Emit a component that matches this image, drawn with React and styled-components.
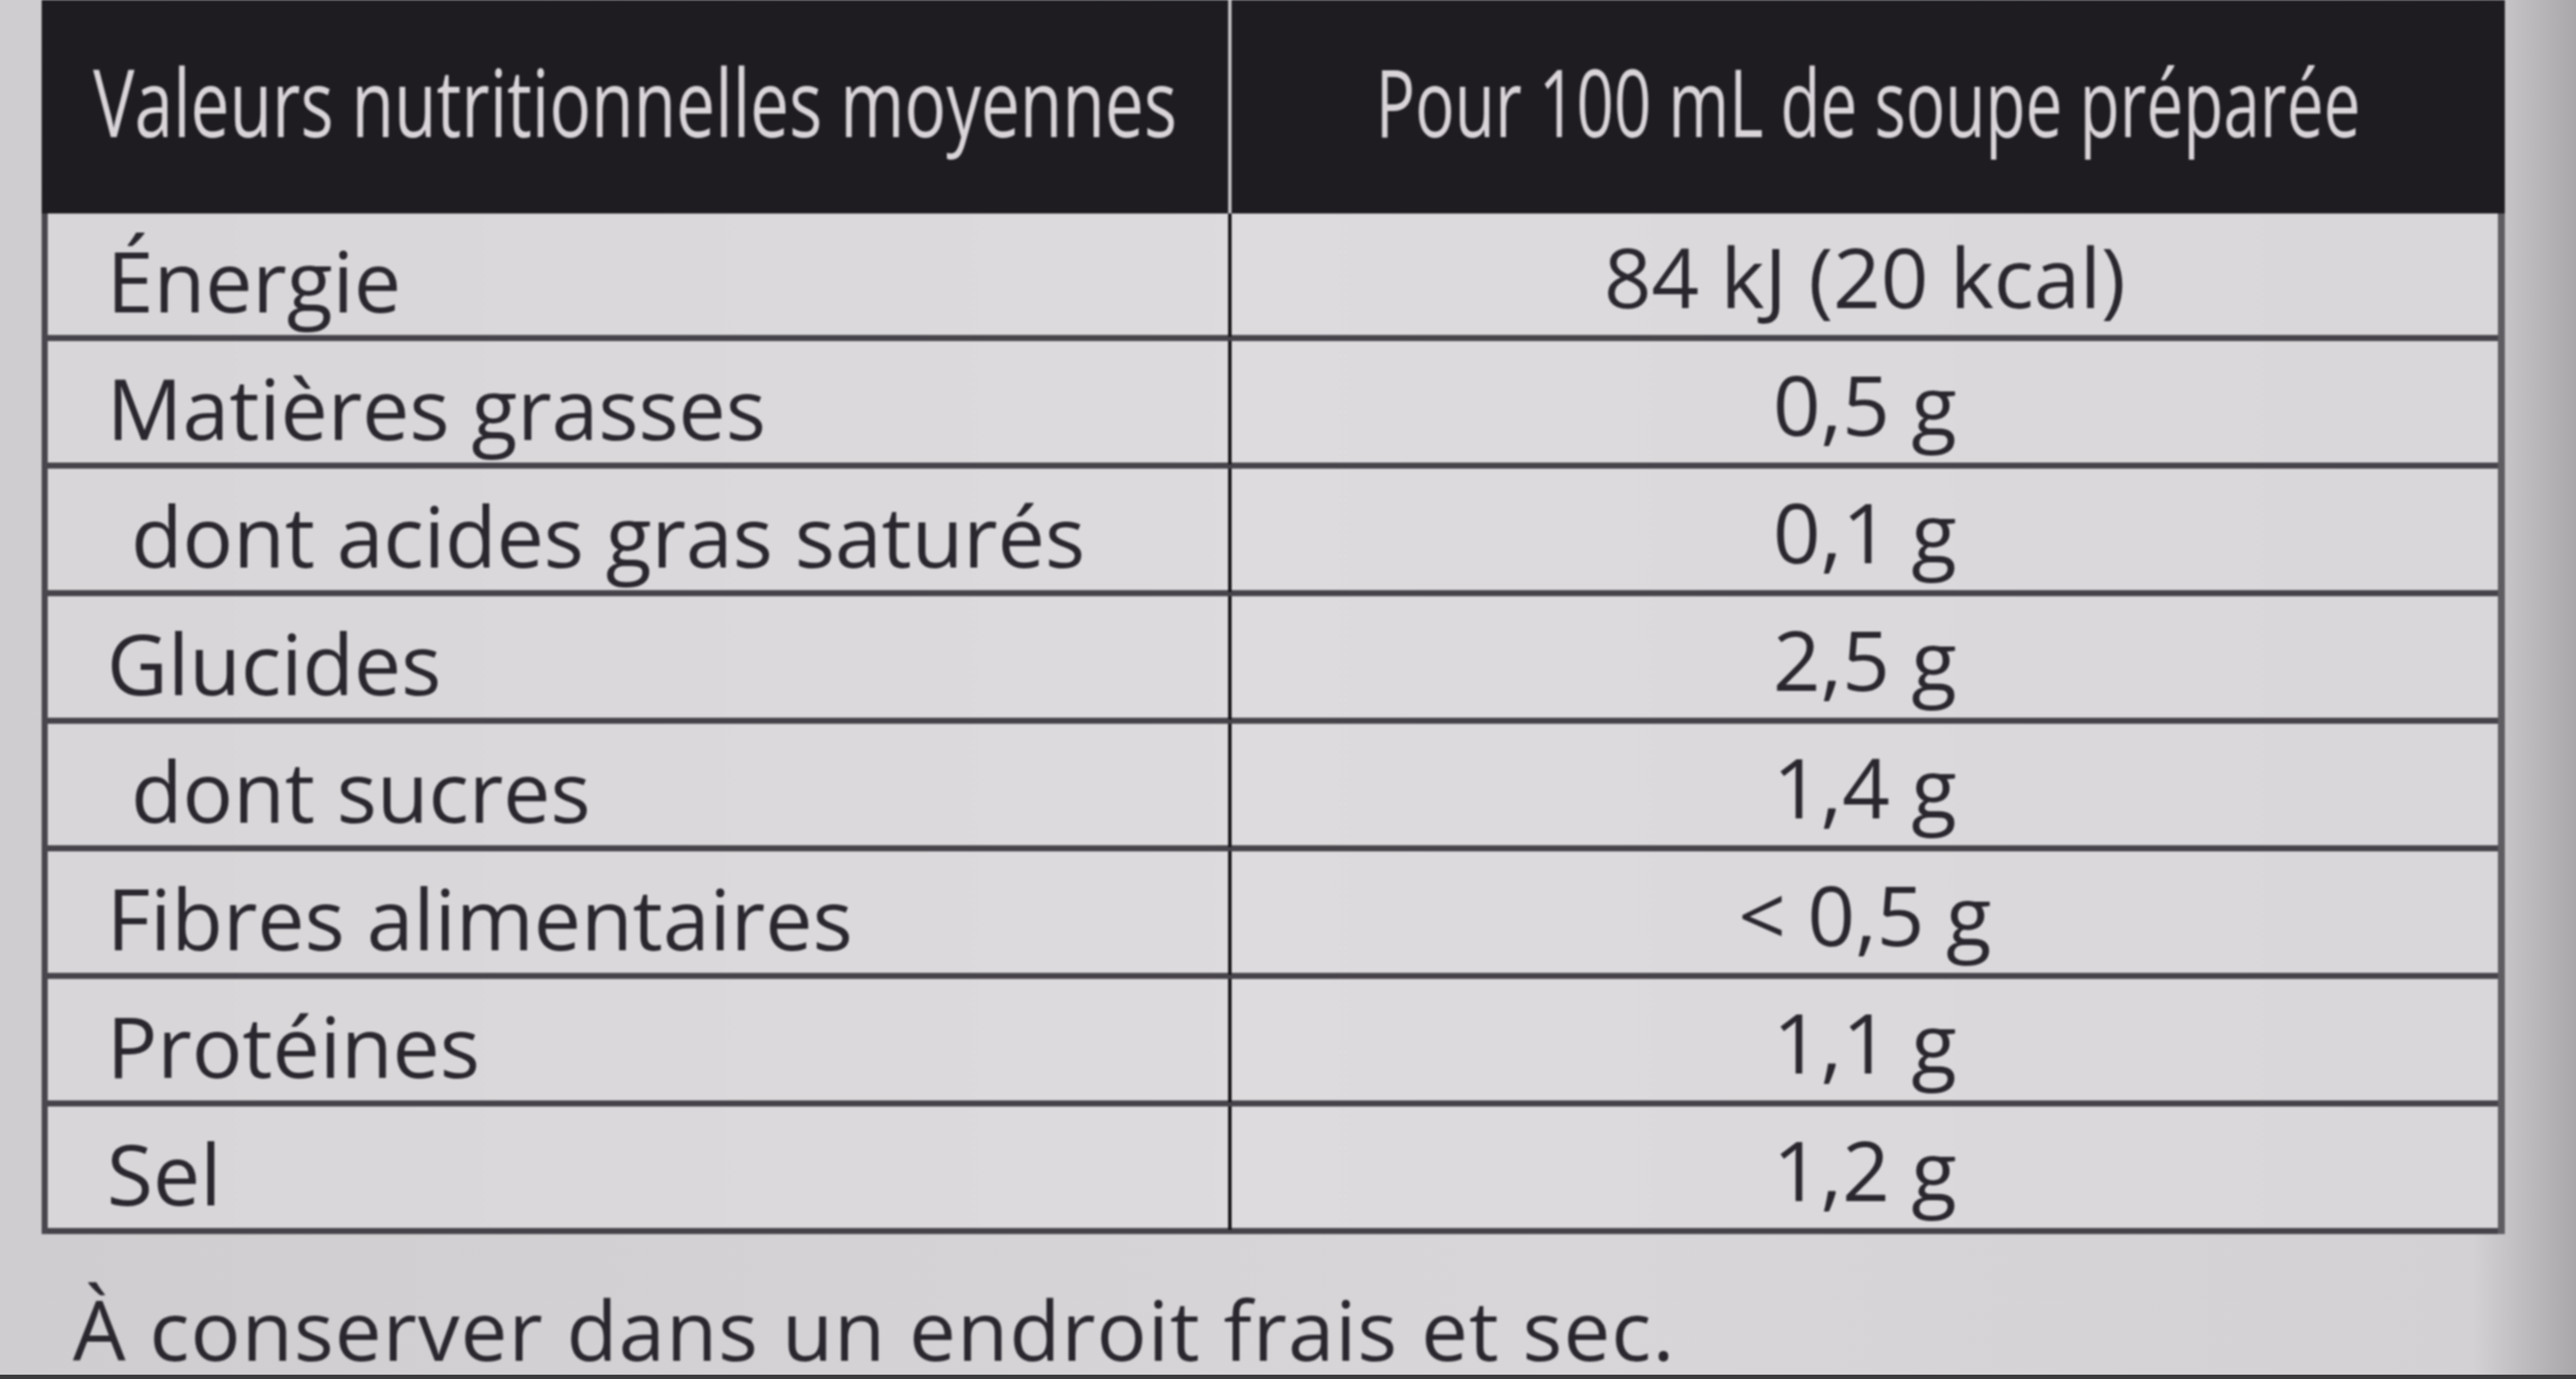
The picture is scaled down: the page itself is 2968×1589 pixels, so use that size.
import React from 'react';
import styled, { createGlobalStyle } from 'styled-components';

const GlobalStyle = createGlobalStyle`
  html, body {
    margin: 0;
    padding: 0;
    background: #d1cfd1;
  }
  * {
    box-sizing: border-box;
  }
`

const Page = styled.div`
  width: 2968px;
  min-height: 1589px;
  display: flex;
  flex-direction: column;
  padding-left: 48px;
  font-family: "Open Sans", "Noto Sans", sans-serif;
  color: #2a272f;
  background:
    linear-gradient(to bottom, transparent 1584px, #3b3a3d 1584px),
    linear-gradient(to right, #cfcdcf 0%, #d8d6d8 60%, #d3d1d3 96%, #a9a7a9 100%);
`

const Sheet = styled.div`
  display: flex;
  flex-direction: column;
  filter: blur(0.8px);
`

const Table = styled.div`
  width: 2838px;
  display: flex;
  flex-direction: column;
`

const HeaderRow = styled.div`
  height: 246px;
  display: grid;
  grid-template-columns: 1367px minmax(0, 1fr);
  background: #1e1c21;
`

const HeaderCell = styled.div`
  min-width: 0;
  display: flex;
  align-items: center;
  justify-content: center;
  padding-bottom: 14px;
  border-left: ${(p) => (p.divider ? '4px solid #c4c2c5' : 'none')};
`

const HeaderText = styled.span`
  display: inline-block;
  flex: none;
  font-size: 108px;
  font-weight: 500;
  color: #d8d4d8;
  white-space: nowrap;
  transform: scaleX(${(p) => p.squeeze});
  transform-origin: center;
`

const Body = styled.div`
  border-left: 7px solid #4a464d;
  border-right: 8px solid #5f5c61;
  background: linear-gradient(to right, #d8d6d8, #dddbdd 50%, #d9d7d9);
`

const Row = styled.div`
  height: 147px;
  display: grid;
  grid-template-columns: 1360px minmax(0, 1fr);
  border-bottom: 7px solid #47434a;
`

const Label = styled.div`
  display: flex;
  align-items: center;
  padding-left: ${(p) => (p.sub ? '96px' : '68px')};
  padding-top: 10px;
  font-size: 97px;
  font-weight: 500;
  white-space: nowrap;
`

const Value = styled.div`
  display: flex;
  align-items: center;
  justify-content: center;
  border-left: 4px solid #141216;
  font-size: 96px;
  font-weight: 500;
  white-space: nowrap;
`

const Note = styled.p`
  margin: 66px 0 0 36px;
  font-size: 96px;
  font-weight: 500;
  line-height: 0.9;
  letter-spacing: 1.3px;
  white-space: nowrap;
`

const rows = [
  { label: 'Énergie', value: '84 kJ (20 kcal)' },
  { label: 'Matières grasses', value: '0,5 g' },
  { label: 'dont acides gras saturés', value: '0,1 g', sub: true },
  { label: 'Glucides', value: '2,5 g' },
  { label: 'dont sucres', value: '1,4 g', sub: true },
  { label: 'Fibres alimentaires', value: '< 0,5 g' },
  { label: 'Protéines', value: '1,1 g' },
  { label: 'Sel', value: '1,2 g' },
];

const App = () => {
  return (
    <Page>
      <GlobalStyle />
      <Sheet>
        <Table>
          <HeaderRow>
            <HeaderCell>
              <HeaderText squeeze={0.74}>Valeurs nutritionnelles moyennes</HeaderText>
            </HeaderCell>
            <HeaderCell divider>
              <HeaderText squeeze={0.7}>Pour 100 mL de soupe préparée</HeaderText>
            </HeaderCell>
          </HeaderRow>
          <Body>
            {rows.map((row) => (
              <Row key={row.label}>
                <Label sub={row.sub}>{row.label}</Label>
                <Value>{row.value}</Value>
              </Row>
            ))}
          </Body>
        </Table>
        <Note>À conserver dans un endroit frais et sec.</Note>
      </Sheet>
    </Page>
  )
}

export default App;
